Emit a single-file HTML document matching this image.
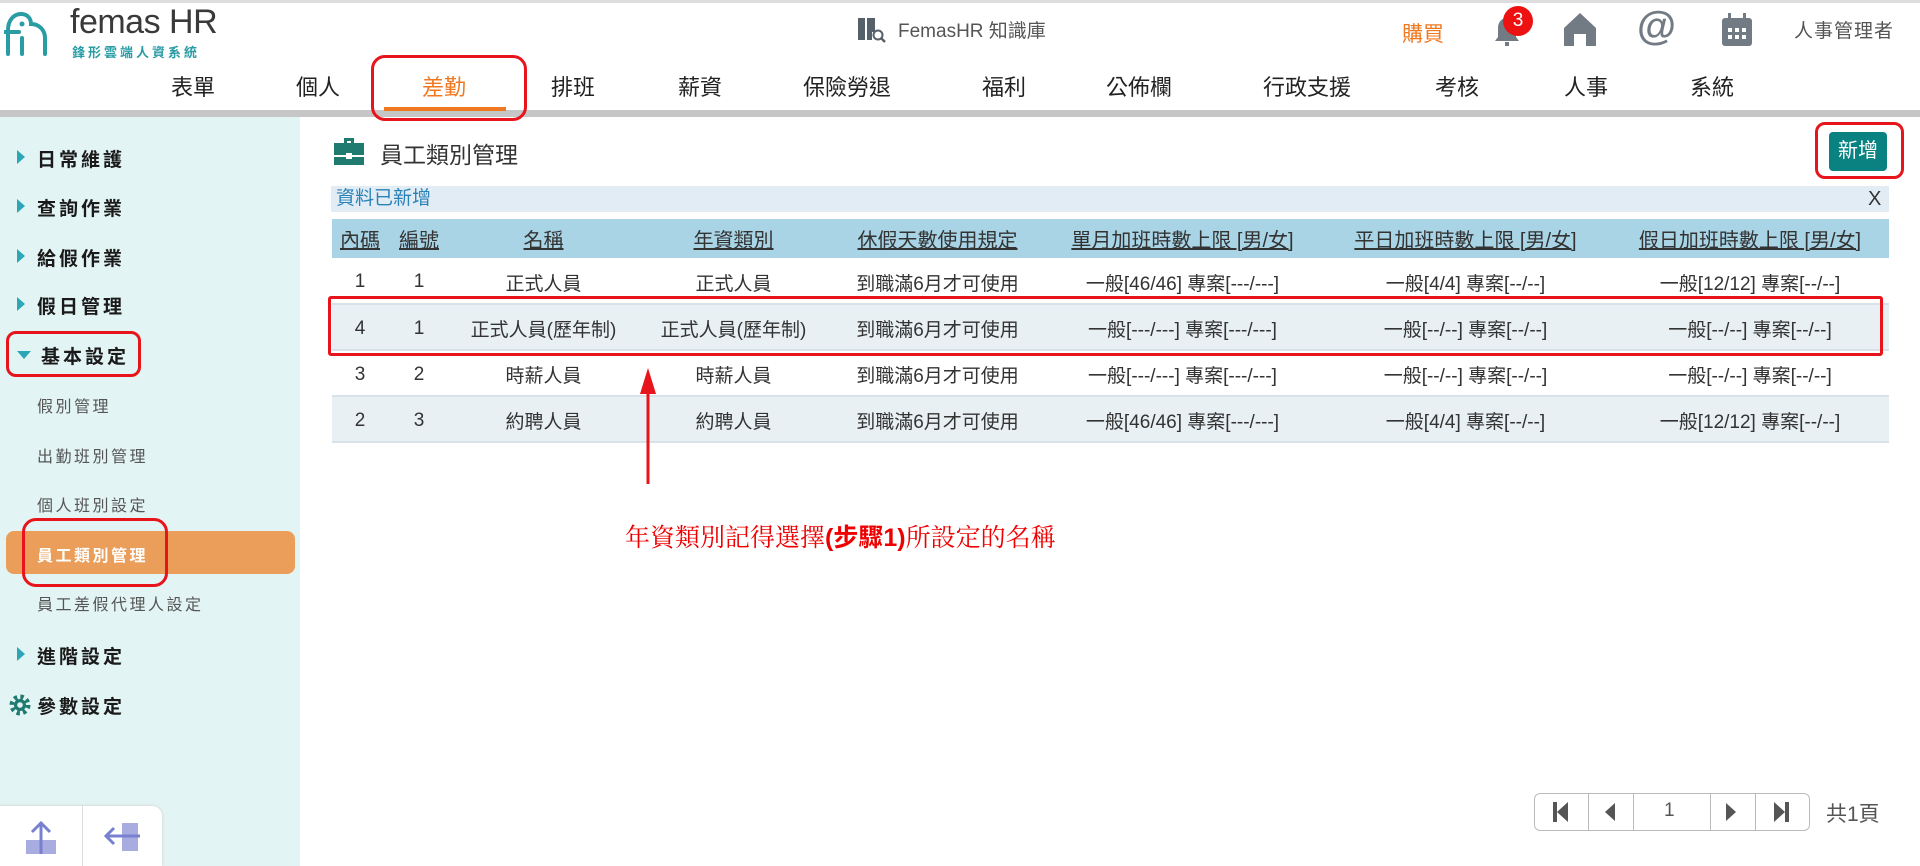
<!DOCTYPE html>
<html><head><meta charset="utf-8">
<style>
*{margin:0;padding:0;box-sizing:border-box}
body{width:1920px;height:866px;overflow:hidden;background:#fff;font-family:"Liberation Sans","Noto Sans CJK TC",sans-serif;position:relative;color:#333}
.abs{position:absolute}
.top{left:0;top:0;width:1920px;height:3px;background:#ddd}
.hbar{left:0;top:110px;width:1920px;height:7px;background:#c6c6c6}
.nav{top:70px;font-size:22px;color:#222;transform:translateX(-50%);white-space:nowrap}
.side{left:0;top:117px;width:300px;height:749px;background:#e3f4f4}
.mi{left:17px;font-size:19px;letter-spacing:3px;color:#1a1a1a;font-weight:bold;white-space:nowrap}
.mi .tri{display:inline-block;width:0;height:0;border-top:7px solid transparent;border-bottom:7px solid transparent;border-left:8px solid #2aa6b6;margin-right:12px;vertical-align:2px}
.si{left:37px;font-size:16px;letter-spacing:2.5px;color:#555;white-space:nowrap}
.redbox{border:3px solid #e8141c;border-radius:10px}
table{border-collapse:collapse;position:absolute;left:332px;top:219px;width:1557px;table-layout:fixed}
th{background:#a8d4e6;height:39px;font-weight:normal;font-size:20px;color:#333;text-decoration:underline;white-space:nowrap}
td{height:46px;text-align:center;font-size:19px;color:#333;white-space:nowrap;border-bottom:2px solid #d8e2e8;padding-top:3px}
tr.alt td{background:#e8f0f4}
</style></head><body>
<div class="abs top"></div>
<svg class="abs" style="left:4px;top:8px" width="56" height="48" viewBox="0 0 56 48"><path d="M4 46V22c0-10 6-16 13-16 7 0 10 5 10 10 8 0 14 6 14 14v16" fill="none" stroke="#2a9ca4" stroke-width="4" stroke-linecap="round"/><path d="M1 24h14" stroke="#2a9ca4" stroke-width="4" stroke-linecap="round"/><circle cx="18" cy="16" r="2.5" fill="#2a9ca4"/><path d="M18 30v16" stroke="#2a9ca4" stroke-width="4" stroke-linecap="round"/></svg>
<div class="abs" style="left:70px;top:3px;font-size:34px;color:#3a3a3a;letter-spacing:-0.5px">femas HR</div>
<div class="abs" style="left:72px;top:42px;font-size:13px;color:#2a9ca4;font-weight:bold;letter-spacing:3px">鋒形雲端人資系統</div>
<svg class="abs" style="left:856px;top:14px" width="30" height="30" viewBox="0 0 30 30"><path d="M2 4h7v22H2zM11 4h8v14h-3v8h-5z" fill="#55606a"/><circle cx="22" cy="21" r="4.5" fill="none" stroke="#55606a" stroke-width="2"/><path d="M25 24l4 4" stroke="#55606a" stroke-width="2.5"/></svg>
<div class="abs" style="left:898px;top:16px;font-size:19px;color:#555">FemasHR 知識庫</div>
<div class="abs" style="left:1402px;top:18px;font-size:21px;color:#f07820">購買</div>
<svg class="abs" style="left:1492px;top:14px" width="30" height="34" viewBox="0 0 30 34"><path d="M15 4c-6 0-9 5-9 10v9l-3 4h24l-3-4v-9c0-5-3-10-9-10z" fill="#727b84"/><rect x="13" y="28" width="4" height="4" fill="#727b84"/></svg>
<div class="abs" style="left:1503px;top:6px;width:30px;height:30px;border-radius:50%;background:#ee1111;color:#fff;font-size:19px;text-align:center;line-height:30px">3</div>
<svg class="abs" style="left:1562px;top:12px" width="36" height="34" viewBox="0 0 36 34"><path d="M18 1L2 16v18h10V22h12v12h10V16z" fill="#727b84"/></svg>
<div class="abs" style="left:1637px;top:4px;font-size:40px;font-weight:bold;color:#727b84">@</div>
<svg class="abs" style="left:1720px;top:12px" width="34" height="36" viewBox="0 0 34 36"><rect x="2" y="6" width="30" height="28" rx="3" fill="#727b84"/><rect x="8" y="1" width="3" height="8" fill="#727b84"/><rect x="23" y="1" width="3" height="8" fill="#727b84"/><g fill="#fff"><rect x="8" y="16" width="4" height="4"/><rect x="15" y="16" width="4" height="4"/><rect x="22" y="16" width="4" height="4"/><rect x="8" y="23" width="4" height="4"/><rect x="15" y="23" width="4" height="4"/><rect x="22" y="23" width="4" height="4"/></g></svg>
<div class="abs" style="left:1794px;top:16px;font-size:19px;color:#555;letter-spacing:1px">人事管理者</div>
<div class="abs nav" style="left:193px">表單</div>
<div class="abs nav" style="left:318px">個人</div>
<div class="abs nav" style="left:444px;color:#f07820">差勤</div>
<div class="abs nav" style="left:573px">排班</div>
<div class="abs nav" style="left:700px">薪資</div>
<div class="abs nav" style="left:847px">保險勞退</div>
<div class="abs nav" style="left:1004px">福利</div>
<div class="abs nav" style="left:1139px">公佈欄</div>
<div class="abs nav" style="left:1307px">行政支援</div>
<div class="abs nav" style="left:1457px">考核</div>
<div class="abs nav" style="left:1586px">人事</div>
<div class="abs nav" style="left:1712px">系統</div>
<div class="abs hbar"></div>
<div class="abs" style="left:384px;top:107px;width:122px;height:4px;background:#f07820"></div>
<div class="abs redbox" style="left:371px;top:55px;width:156px;height:66px;border-radius:14px"></div>
<div class="abs side"></div>
<div class="abs mi" style="top:145px"><span class="tri"></span>日常維護</div>
<div class="abs mi" style="top:194px"><span class="tri"></span>查詢作業</div>
<div class="abs mi" style="top:244px"><span class="tri"></span>給假作業</div>
<div class="abs mi" style="top:292px"><span class="tri"></span>假日管理</div>
<div class="abs mi" style="top:342px"><span class="tri" style="border-left:7px solid transparent;border-right:7px solid transparent;border-top:8px solid #2aa6b6;border-bottom:0;vertical-align:4px;margin-right:10px"></span>基本設定</div>
<div class="abs redbox" style="left:6px;top:331px;width:135px;height:46px"></div>
<div class="abs si" style="top:393px">假別管理</div>
<div class="abs si" style="top:443px">出勤班別管理</div>
<div class="abs si" style="top:492px">個人班別設定</div>
<div class="abs" style="left:6px;top:531px;width:289px;height:43px;background:#eb9e59;border-radius:8px"></div>
<div class="abs si" style="top:542px;color:#fff;font-weight:bold">員工類別管理</div>
<div class="abs redbox" style="left:22px;top:518px;width:146px;height:69px;border-radius:14px"></div>
<div class="abs si" style="top:591px">員工差假代理人設定</div>
<div class="abs mi" style="top:642px"><span class="tri"></span>進階設定</div>
<svg class="abs" style="left:9px;top:694px" width="22" height="22" viewBox="0 0 22 22"><circle cx="11" cy="11" r="8" fill="none" stroke="#1f7a70" stroke-width="5" stroke-dasharray="3.2 3.1"/><circle cx="11" cy="11" r="6" fill="#1f7a70"/><circle cx="11" cy="11" r="2.8" fill="#e3f4f4"/></svg>
<div class="abs mi" style="left:37px;top:692px">參數設定</div>
<div class="abs" style="left:0;top:806px;width:162px;height:60px;background:#fff;border-radius:0 10px 0 0;box-shadow:0 0 3px #ccc"></div>
<div class="abs" style="left:82px;top:806px;width:1px;height:60px;background:#ddd"></div>
<svg class="abs" style="left:24px;top:820px" width="34" height="36" viewBox="0 0 34 36"><rect x="2" y="20" width="30" height="14" fill="#a8ace0"/><path d="M17 34V4M8 12l9-9 9 9" stroke="#7a80d0" stroke-width="3" fill="none"/></svg>
<svg class="abs" style="left:102px;top:820px" width="40" height="36" viewBox="0 0 40 36"><rect x="20" y="3" width="16" height="28" fill="#a8ace0"/><path d="M4 16h34M12 8l-8 8 8 8" stroke="#7a80d0" stroke-width="3" fill="none"/></svg>
<svg class="abs" style="left:333px;top:136px" width="32" height="30" viewBox="0 0 32 30"><path d="M11 2h10v5h-3V5h-4v2h-3z" fill="#1f7a70"/><rect x="1" y="7" width="30" height="22" fill="#1f7a70"/><rect x="1" y="19" width="30" height="2" fill="#fff"/><rect x="13" y="17" width="6" height="6" fill="#fff"/></svg>
<div class="abs" style="left:380px;top:136px;font-size:23px;color:#333">員工類別管理</div>
<div class="abs" style="left:1829px;top:132px;width:58px;height:39px;background:#0b8282;border-radius:4px;color:#fff;font-size:20px;text-align:center;line-height:39px">新增</div>
<div class="abs redbox" style="left:1815px;top:122px;width:89px;height:57px"></div>
<div class="abs" style="left:331px;top:186px;width:1558px;height:26px;background:#e2ecf4"></div>
<div class="abs" style="left:336px;top:186px;font-size:19px;color:#2a82b8;line-height:26px">資料已新增</div>
<div class="abs" style="left:1868px;top:186px;font-size:20px;color:#333;line-height:26px">X</div>
<table>
<colgroup><col style="width:56px"><col style="width:62px"><col style="width:187px"><col style="width:193px"><col style="width:215px"><col style="width:275px"><col style="width:291px"><col style="width:278px"></colgroup>
<tr><th>內碼</th><th>編號</th><th>名稱</th><th>年資類別</th><th>休假天數使用規定</th><th>單月加班時數上限 [男/女]</th><th>平日加班時數上限 [男/女]</th><th>假日加班時數上限 [男/女]</th></tr>
<tr><td>1</td><td>1</td><td>正式人員</td><td>正式人員</td><td>到職滿6月才可使用</td><td>一般[46/46] 專案[---/---]</td><td>一般[4/4] 專案[--/--]</td><td>一般[12/12] 專案[--/--]</td></tr>
<tr class="alt"><td>4</td><td>1</td><td>正式人員(歷年制)</td><td>正式人員(歷年制)</td><td>到職滿6月才可使用</td><td>一般[---/---] 專案[---/---]</td><td>一般[--/--] 專案[--/--]</td><td>一般[--/--] 專案[--/--]</td></tr>
<tr><td>3</td><td>2</td><td>時薪人員</td><td>時薪人員</td><td>到職滿6月才可使用</td><td>一般[---/---] 專案[---/---]</td><td>一般[--/--] 專案[--/--]</td><td>一般[--/--] 專案[--/--]</td></tr>
<tr class="alt"><td>2</td><td>3</td><td>約聘人員</td><td>約聘人員</td><td>到職滿6月才可使用</td><td>一般[46/46] 專案[---/---]</td><td>一般[4/4] 專案[--/--]</td><td>一般[12/12] 專案[--/--]</td></tr>
</table>
<div class="abs" style="left:328px;top:296px;width:1555px;height:60px;border:3px solid #e8141c;border-radius:3px"></div>
<svg class="abs" style="left:636px;top:366px" width="24" height="122" viewBox="0 0 24 122"><path d="M12 118V20" stroke="#e8141c" stroke-width="3"/><path d="M4 28L12 2l8 26z" fill="#e8141c"/></svg>
<div class="abs" style="left:625px;top:518px;font-size:25px;color:#e00;font-family:'Liberation Serif','Noto Serif CJK SC',serif;white-space:nowrap">年資類別記得選擇<b style="font-family:'Liberation Sans','Noto Sans CJK TC',sans-serif">(步驟1)</b>所設定的名稱</div>
<div class="abs" style="left:1534px;top:793px;width:276px;height:38px;border:1px solid #bbb;border-radius:6px"></div>
<div class="abs" style="left:1588px;top:794px;width:1px;height:36px;background:#bbb"></div>
<div class="abs" style="left:1633px;top:794px;width:1px;height:36px;background:#bbb"></div>
<div class="abs" style="left:1710px;top:794px;width:1px;height:36px;background:#bbb"></div>
<div class="abs" style="left:1755px;top:794px;width:1px;height:36px;background:#bbb"></div>
<svg class="abs" style="left:1552px;top:801px" width="18" height="22" viewBox="0 0 18 22"><rect x="1" y="1" width="4" height="20" fill="#555"/><path d="M16 1v20L5 11z" fill="#555"/></svg>
<svg class="abs" style="left:1603px;top:801px" width="14" height="22" viewBox="0 0 14 22"><path d="M12 2v18L2 11z" fill="#555"/></svg>
<div class="abs" style="left:1664px;top:800px;font-size:19px;color:#555">1</div>
<svg class="abs" style="left:1724px;top:801px" width="14" height="22" viewBox="0 0 14 22"><path d="M2 2v18l10-9z" fill="#555"/></svg>
<svg class="abs" style="left:1772px;top:801px" width="18" height="22" viewBox="0 0 18 22"><path d="M2 1v20l11-10z" fill="#555"/><rect x="13" y="1" width="4" height="20" fill="#555"/></svg>
<div class="abs" style="left:1826px;top:798px;font-size:21px;color:#555">共1頁</div>
</body></html>
